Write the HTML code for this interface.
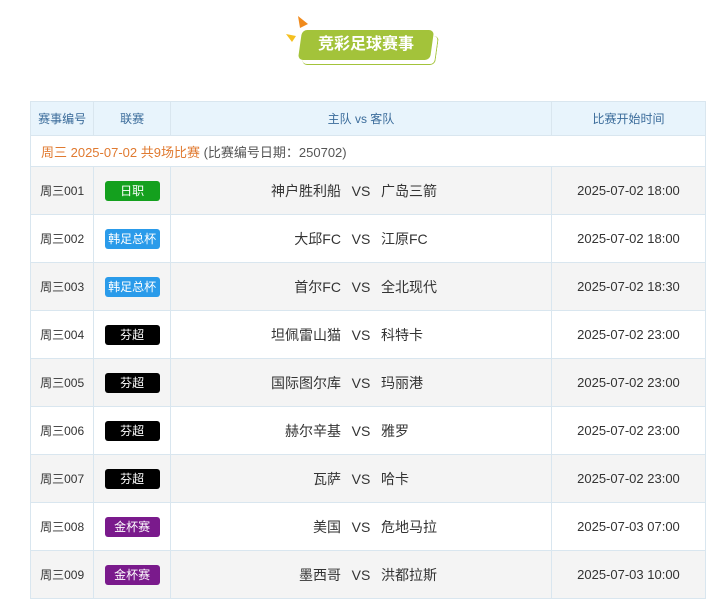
<!DOCTYPE html>
<html><head><meta charset="utf-8"><style>
body{margin:0;background:#fff;font-family:"Liberation Sans","Noto Sans CJK SC",sans-serif;width:728px;height:615px;overflow:hidden;position:relative}
.title{position:absolute;left:300px;top:30px;width:132px;height:30px;background:#a3c33a;border-radius:5px;transform:skewX(-8deg);color:#fff;font-weight:bold;font-size:16px;line-height:30px;text-align:center}
.title span{display:inline-block;transform:skewX(8deg)}
.sh{position:absolute;left:304px;top:36px;width:132px;height:28px;border:1px solid #a3c33a;border-radius:5px;transform:skewX(-8deg);border-left:none;border-top:none}
table{position:absolute;left:30px;top:101px;border-collapse:collapse;width:676px;font-size:13px;color:#333}
td,th{border:1px solid #d9e6ef;padding:0;text-align:center}
th{background:#e8f4fc;color:#3a6b9a;font-weight:normal;height:33px;font-size:12px}
tr.d td{height:30px;text-align:left;padding-left:10px;color:#e07a30}
tr.d td b{font-weight:normal;color:#555}
tr.r td{height:47px}
tr.r td:first-child{font-size:12px}
tr.g td{background:#f4f4f4}
.bd{display:inline-block;width:55px;height:20px;line-height:20px;border-radius:3px;color:#fff;font-size:12px}
.tm{display:flex;align-items:center;font-size:14px;color:#333}
.tm .h{width:170px;text-align:right}.tm .v{width:40px;text-align:center}.tm .a{width:170px;text-align:left}
</style></head><body>
<svg style="position:absolute;left:284px;top:14px" width="30" height="30"><polygon points="14,2 24,10 16,14" fill="#f08a1c"/><polygon points="2,20 12,22 8,28" fill="#f5c020"/></svg>
<div class="sh"></div>
<div class="title"><span>竞彩足球赛事</span></div>
<table>
<tr><th style="width:63px">赛事编号</th><th style="width:76px">联赛</th><th>主队 vs 客队</th><th style="width:155px">比赛开始时间</th></tr>
<tr class="d"><td colspan="4">周三 2025-07-02 共9场比赛 <b>(比赛编号日期：250702)</b></td></tr>
<tr class="r g"><td>周三001</td><td><span class="bd" style="background:#14a01e">日职</span></td><td><div class="tm"><span class="h">神户胜利船</span><span class="v">VS</span><span class="a">广岛三箭</span></div></td><td>2025-07-02 18:00</td></tr>
<tr class="r"><td>周三002</td><td><span class="bd" style="background:#2a9bea">韩足总杯</span></td><td><div class="tm"><span class="h">大邱FC</span><span class="v">VS</span><span class="a">江原FC</span></div></td><td>2025-07-02 18:00</td></tr>
<tr class="r g"><td>周三003</td><td><span class="bd" style="background:#2a9bea">韩足总杯</span></td><td><div class="tm"><span class="h">首尔FC</span><span class="v">VS</span><span class="a">全北现代</span></div></td><td>2025-07-02 18:30</td></tr>
<tr class="r"><td>周三004</td><td><span class="bd" style="background:#000">芬超</span></td><td><div class="tm"><span class="h">坦佩雷山猫</span><span class="v">VS</span><span class="a">科特卡</span></div></td><td>2025-07-02 23:00</td></tr>
<tr class="r g"><td>周三005</td><td><span class="bd" style="background:#000">芬超</span></td><td><div class="tm"><span class="h">国际图尔库</span><span class="v">VS</span><span class="a">玛丽港</span></div></td><td>2025-07-02 23:00</td></tr>
<tr class="r"><td>周三006</td><td><span class="bd" style="background:#000">芬超</span></td><td><div class="tm"><span class="h">赫尔辛基</span><span class="v">VS</span><span class="a">雅罗</span></div></td><td>2025-07-02 23:00</td></tr>
<tr class="r g"><td>周三007</td><td><span class="bd" style="background:#000">芬超</span></td><td><div class="tm"><span class="h">瓦萨</span><span class="v">VS</span><span class="a">哈卡</span></div></td><td>2025-07-02 23:00</td></tr>
<tr class="r"><td>周三008</td><td><span class="bd" style="background:#7a1a8c">金杯赛</span></td><td><div class="tm"><span class="h">美国</span><span class="v">VS</span><span class="a">危地马拉</span></div></td><td>2025-07-03 07:00</td></tr>
<tr class="r g"><td>周三009</td><td><span class="bd" style="background:#7a1a8c">金杯赛</span></td><td><div class="tm"><span class="h">墨西哥</span><span class="v">VS</span><span class="a">洪都拉斯</span></div></td><td>2025-07-03 10:00</td></tr>
</table>
</body></html>
